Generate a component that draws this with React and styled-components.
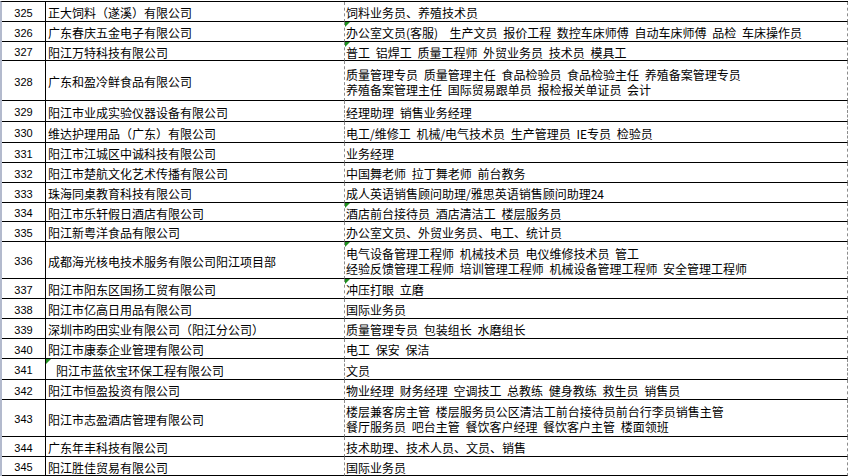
import React from "react";
import styled, { createGlobalStyle } from "styled-components";

const GlobalStyle = createGlobalStyle`
  html, body {
    margin: 0;
    padding: 0;
    background: #fff;
  }
  * {
    box-sizing: border-box;
  }
`;

// rows as they show in the sheet; h = row height in px (with its bottom border)
const rows = [
    {no: 325, h: 20, name: "正大饲料（遂溪）有限公司", jobs: ["饲料业务员、养殖技术员"]},
    {no: 326, h: 20, name: "广东春庆五金电子有限公司", jobs: ["办公室文员(客服)  生产文员 报价工程 数控车床师傅 自动车床师傅 品检 车床操作员"], mark: "jobs"},
    {no: 327, h: 19, name: "阳江万特科技有限公司", jobs: ["普工 铝焊工 质量工程师 外贸业务员 技术员 模具工"], mark: "jobs"},
    {
        no: 328, h: 40, name: "广东和盈冷鲜食品有限公司",
        jobs: ["质量管理专员 质量管理主任 食品检验员 食品检验主任 养殖备案管理专员", "养殖备案管理主任 国际贸易跟单员 报检报关单证员 会计"]
    },
    {no: 329, h: 21, name: "阳江市业成实验仪器设备有限公司", jobs: ["经理助理 销售业务经理"]},
    {no: 330, h: 21, name: "维达护理用品（广东）有限公司", jobs: ["电工/维修工 机械/电气技术员 生产管理员 IE专员 检验员"]},
    {no: 331, h: 20, name: "阳江市江城区中诚科技有限公司", jobs: ["业务经理"]},
    {no: 332, h: 20, name: "阳江市楚航文化艺术传播有限公司", jobs: ["中国舞老师 拉丁舞老师 前台教务"]},
    {no: 333, h: 20, name: "珠海同桌教育科技有限公司", jobs: ["成人英语销售顾问助理/雅思英语销售顾问助理24"]},
    {no: 334, h: 19, name: "阳江市乐轩假日酒店有限公司", jobs: ["酒店前台接待员 酒店清洁工 楼层服务员"], mark: "jobs"},
    {no: 335, h: 20, name: "阳江新粤洋食品有限公司", jobs: ["办公室文员、外贸业务员、电工、统计员"]},
    {
        no: 336, h: 37, name: "成都海光核电技术服务有限公司阳江项目部",
        jobs: ["电气设备管理工程师 机械技术员 电仪维修技术员 管工", "经验反馈管理工程师 培训管理工程师 机械设备管理工程师 安全管理工程师"],
        mark: "jobs"
    },
    {no: 337, h: 20, name: "阳江市阳东区国扬工贸有限公司", jobs: ["冲压打眼 立磨"], mark: "jobs"},
    {no: 338, h: 20, name: "阳江市亿高日用品有限公司", jobs: ["国际业务员"]},
    {no: 339, h: 20, name: "深圳市昀田实业有限公司（阳江分公司）", jobs: ["质量管理专员 包装组长 水磨组长"]},
    {no: 340, h: 20, name: "阳江市康泰企业管理有限公司", jobs: ["电工 保安 保洁"]},
    {no: 341, h: 21, name: "阳江市蓝依宝环保工程有限公司", jobs: ["文员"], mark: "name", indent: true},
    {no: 342, h: 20, name: "阳江市恒盈投资有限公司", jobs: ["物业经理 财务经理 空调技工 总教练 健身教练 救生员 销售员"]},
    {
        no: 343, h: 37, name: "阳江市志盈酒店管理有限公司",
        jobs: ["楼层兼客房主管 楼层服务员公区清洁工前台接待员前台行李员销售主管", "餐厅服务员 吧台主管 餐饮客户经理 餐饮客户主管 楼面领班"]
    },
    {no: 344, h: 20, name: "广东年丰科技有限公司", jobs: ["技术助理、技术人员、文员、销售"]},
    {no: 345, h: 19, name: "阳江胜佳贸易有限公司", jobs: ["国际业务员"]},
];

export default function App() {
    return (
        <>
            <GlobalStyle/>
            <Sheet>
                {rows.map((r) => (
                    <Row key={r.no} $h={r.h}>
                        <NumCell>{r.no}</NumCell>
                        <NameCell $indent={r.indent}>
                            {r.mark === "name" && <Marker/>}
                            <Line>{r.name}</Line>
                        </NameCell>
                        <JobCell>
                            {r.mark === "jobs" && <Marker/>}
                            {r.jobs.map((j, i) => (
                                <Line key={i}>{j}</Line>
                            ))}
                        </JobCell>
                    </Row>
                ))}
            </Sheet>
        </>
    );
}

const Sheet = styled.div`
    width: 848px;
    margin-top: 1px;
    border-left: 2px solid #b3bacd;
    border-top: 1px solid #000;
    font-family: "Noto Sans CJK SC", "Liberation Sans", sans-serif;
    font-size: 12px;
    color: #000;
`;

const Row = styled.div`
    display: grid;
    grid-template-columns: 44px 299px 503px;
    height: ${(p) => p.$h}px;
`;

const Cell = styled.div`
    position: relative;
    display: flex;
    flex-direction: column;
    justify-content: center;
    border-bottom: 1px solid #000;
    padding-top: 2px;
    overflow: hidden;
`;

const NumCell = styled(Cell)`
    align-items: center;
    border-right: 1px solid #000;
    font-family: "Liberation Sans", Arial, sans-serif;
    font-size: 11px;
`;

const NameCell = styled(Cell)`
    padding-left: ${(p) => (p.$indent ? 10 : 2)}px;
    border-right: 1px dashed #8c8c8c;
`;

const JobCell = styled(Cell)`
    padding-left: 1px;
    border-right: 1px dashed #8c8c8c;
`;

const Line = styled.div`
    white-space: pre;
    line-height: 15px;
    word-spacing: 3px;
`;

const Marker = styled.span`
    position: absolute;
    top: 0;
    left: 0;
    width: 0;
    height: 0;
    border-top: 5px solid #1f8f1f;
    border-right: 5px solid transparent;
`;
